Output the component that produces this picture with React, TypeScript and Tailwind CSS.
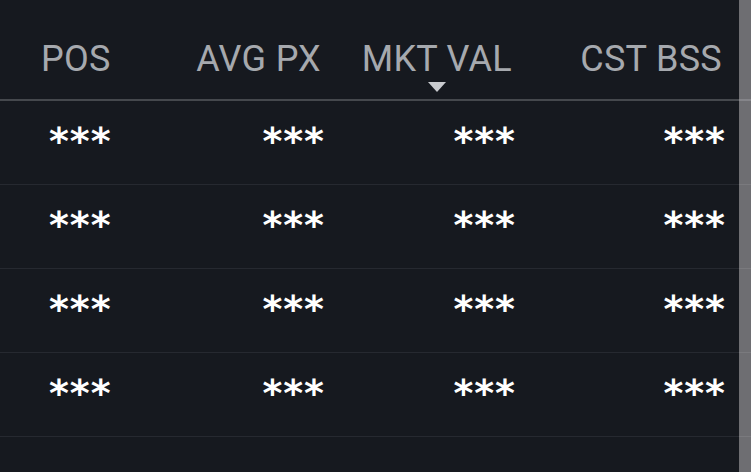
const headers = [
    { label: 'POS', align: 'left' },
    { label: 'AVG PX', align: 'right' },
    { label: 'MKT VAL', align: 'right', sorted: true },
    { label: 'CST BSS', align: 'right' },
];

const rows = [0, 1, 2, 3];

const cols = 'grid grid-cols-[150px_188px_191px_210px]';

export default function App() {
    return (
        <div className="w-[751px] h-[472px] overflow-hidden bg-[#16191f] flex" style={{ fontFamily: 'Roboto, "Noto Sans", sans-serif' }}>
            <div className="w-[739px] shrink-0 flex flex-col">
                <div className={`${cols} h-[101px] shrink-0 border-b-2 border-[#45484d]`}>
                    {headers.map((h) => (
                        <div key={h.label} className={`pt-[41px] flex ${h.align === 'left' ? 'justify-start pl-[41px]' : 'justify-end pr-[17px]'}`}>
                            <div className="flex flex-col items-center">
                                <span className="text-[36px] leading-[36px] text-[#a6a9ae] tracking-[0.3px]">{h.label}</span>
                                {h.sorted && (
                                    <svg width="18" height="10" viewBox="0 0 18 10" className="mt-[5px]">
                                        <path d="M0 0 H18 L9 10 Z" fill="#c9cbcf" />
                                    </svg>
                                )}
                            </div>
                        </div>
                    ))}
                </div>
                {rows.map((r) => (
                    <div key={r} className={`${cols} h-[84px] shrink-0 border-b border-[#262930]`}>
                        {headers.map((h) => (
                            <div key={h.label} className={`flex items-center ${h.align === 'left' ? 'justify-start pl-[49px]' : 'justify-end pr-[13px]'}`}>
                                <span className="text-[38px] font-bold text-white tracking-[1px] -mt-[2px]" style={{ fontFamily: '"DejaVu Sans", sans-serif' }}>***</span>
                            </div>
                        ))}
                    </div>
                ))}
            </div>
            <div className="w-[12px] h-[472px] shrink-0 bg-[#6e6e72] flex flex-col">
                <div className="h-[101px] shrink-0 border-b-2 border-[#85858a]" />
                {rows.map((r) => (
                    <div key={r} className="h-[84px] shrink-0 border-b border-[#7a7a7e]" />
                ))}
            </div>
        </div>
    );
}
